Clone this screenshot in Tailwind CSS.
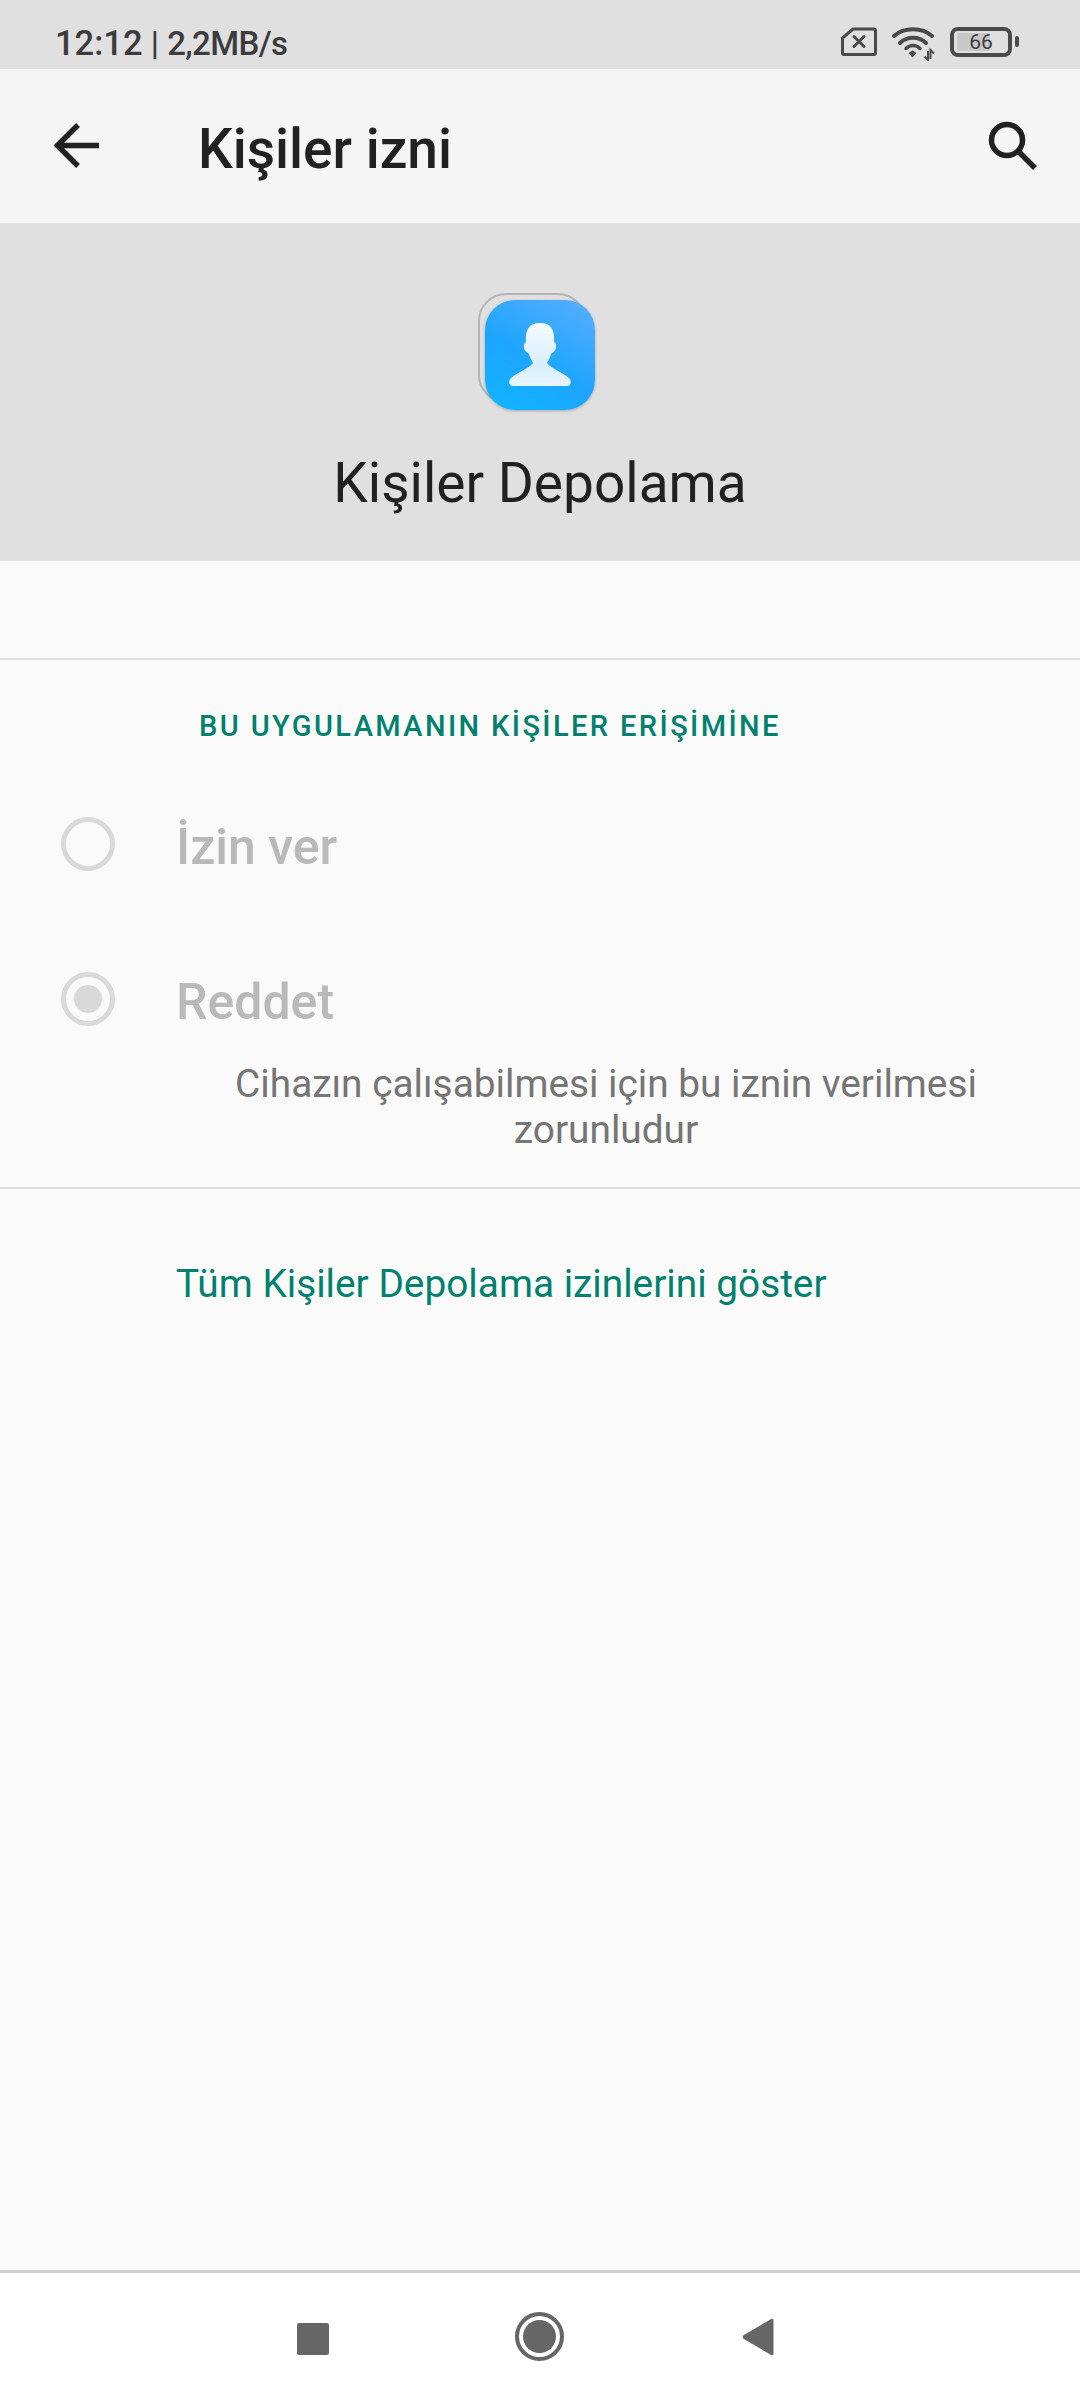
<!DOCTYPE html>
<html lang="en">

<head>
    <meta charset="UTF-8">
    <meta name="viewport" content="width=device-width, initial-scale=1.0">
    <title>Kişiler izni</title>
    <script src="https://cdn.jsdelivr.net/npm/@tailwindcss/browser@4"></script>
</head>

<body class="bg-[#fafafa] font-['Roboto',sans-serif]">
    <div class="w-[1080px] h-[2400px] flex flex-col overflow-hidden">

        <!-- Status bar -->
        <div class="h-[69px] bg-[#e0e0e0] flex items-start justify-between pl-[55px] pr-[61px] shrink-0">
            <p class="leading-[40px] mt-[23px] font-medium text-[#3c3c3c] text-[33px] whitespace-nowrap"><span class="text-[34.500px]">12:12</span> | <span class="tracking-[-0.600px]">2,2MB/s</span></p>
            <div class="flex items-start mt-[27px]">
                <svg width="36" height="30" viewBox="0 0 36 30" fill="none" stroke="#4a4a4a" stroke-width="3">
                    <path d="M12 2H33a1.500 1.500 0 0 1 1.500 1.500V26a1.500 1.500 0 0 1-1.500 1.500H3a1.500 1.500 0 0 1-1.500-1.500V11Z" />
                    <path d="M13 9.500 23 19.500M23 9.500 13 19.500" stroke-linecap="round" />
                </svg>
                <svg width="44" height="34" viewBox="0 0 44 34" fill="none" stroke="#4a4a4a" stroke-width="4" stroke-linecap="round" class="ml-[15px]">
                    <path d="M2 9C12 0 30 0 40 9" />
                    <path d="M8 16C15 9 27 9 34 16" />
                    <path d="M14 21.500C18 17.500 24 17.500 28 21.500" stroke-width="3.500" />
                    <path d="M16.500 26 20.500 23.500 24.500 26 20.500 30.500Z" fill="#4a4a4a" stroke="none" />
                    <path d="M36 24V33L32.500 29.500M38.500 32V23L42 26.500" stroke-width="2" stroke-linecap="butt" />
                </svg>
                <div class="relative w-[62px] h-[30px] border-[4px] border-[#4a4a4a] rounded-[8px] flex items-center ml-[14px]">
                    <div class="absolute left-[3px] top-[2px] bottom-[2px] w-[33px] bg-[#c8c8c8] rounded-[2px]"></div>
                    <span class="relative w-full text-center text-[21px] leading-[22px] text-[#3c3c3c]">66</span>
                </div>
                <div class="w-[4px] h-[11px] bg-[#4a4a4a] rounded-[2px] ml-[3px] mt-[9px]"></div>
            </div>
        </div>

        <!-- Toolbar -->
        <div class="h-[154px] bg-[#f5f5f5] flex items-center justify-between pl-[54px] pr-[42px] shrink-0">
            <div class="flex items-center">
                <svg width="45" height="45" viewBox="0 0 45 45" fill="none" stroke="#212121" stroke-width="5.500" class="mt-[-1px]">
                    <path d="M45 22.500H4" />
                    <path d="M24 2 3.500 22.500 24 43" />
                </svg>
                <h1 class="ml-[99px] text-[55px] leading-[64px] font-medium text-[#212121] mt-[5px]">Kişiler izni</h1>
            </div>
            <svg width="50" height="50" viewBox="0 0 50 50" fill="none" stroke="#212121" stroke-width="5.500">
                <circle cx="19" cy="19" r="15.500" />
                <path d="M30 30 47 47" />
            </svg>
        </div>

        <!-- App header -->
        <div class="h-[338px] bg-[#e0e0e0] flex flex-col items-center shrink-0">
            <div class="relative w-[124px] h-[118px] mt-[70px]">
                <div class="absolute left-0 top-0 w-[108px] h-[110px] border-[2px] border-[#b4b4b4] rounded-[28px]"></div>
                <div class="absolute left-[7px] top-[7px] w-[110px] h-[110px] rounded-[30px] bg-[linear-gradient(30deg,#10b4ff_5%,#1ea5ff_45%,#5aaeff_100%)] shadow-[0_1px_3px_rgba(0,0,0,0.25)] flex items-center justify-center">
                    <svg width="64" height="64" viewBox="0 0 64 64">
                        <defs>
                            <linearGradient id="person" x1="0" y1="0" x2="0" y2="1">
                                <stop offset="0" stop-color="#f4faff" />
                                <stop offset="0.7" stop-color="#d8eeff" />
                                <stop offset="1" stop-color="#eaf6ff" />
                            </linearGradient>
                        </defs>
                        <path fill="url(#person)" d="M32 0C43 0 47 7 46 19 48.500 20 49 25 46.500 28 45 30 44 30 43 31 42 35 40 38 39 40 44 46 56 50 61 55 64 58 63 63 59 63H5C1 63 0 58 3 55 8 50 20 46 25 40 24 38 22 35 21 31 20 30 19 30 17.500 28 15 25 15.500 20 18 19 17 7 21 0 32 0Z" />
                    </svg>
                </div>
            </div>
            <p class="mt-[40px] text-[55px] leading-[64px] text-[#212121]">Kişiler Depolama</p>
        </div>

        <!-- Permission section -->
        <div class="mt-[97px] border-t-[2px] border-b-[2px] border-[#dedede] h-[531px] shrink-0">
            <p class="ml-[199px] mt-[46px] text-[29px] leading-[40px] font-medium tracking-[2.400px] text-[#00806f]">BU UYGULAMANIN KİŞİLER ERİŞİMİNE</p>
            <div class="flex items-center h-[64px] mt-[67px] pl-[61px]">
                <div class="w-[54px] h-[54px] mb-[2px] rounded-full border-[5px] border-[#d9d9d9]"></div>
                <span class="ml-[61px] mt-[3px] text-[50px] leading-[64px] font-medium text-[#b9b9b9]">İzin ver</span>
            </div>
            <div class="flex items-center h-[64px] mt-[91px] pl-[61px]">
                <div class="w-[54px] h-[54px] mb-[2px] rounded-full border-[5px] border-[#d9d9d9] flex items-center justify-center">
                    <div class="w-[28px] h-[28px] rounded-full bg-[#d9d9d9]"></div>
                </div>
                <span class="ml-[61px] mt-[3px] text-[50px] leading-[64px] font-medium text-[#b9b9b9]">Reddet</span>
            </div>
            <p class="mt-[29px] pl-[176px] pr-[44px] text-center text-[38.800px] leading-[46px] text-[#757575]">Cihazın çalışabilmesi için bu iznin verilmesi zorunludur</p>
        </div>

        <!-- Link -->
        <a class="ml-[176px] mt-[72px] text-[38.800px] leading-[46px] text-[#00806f]">Tüm Kişiler Depolama izinlerini göster</a>

        <!-- Nav bar -->
        <div class="mt-auto h-[130px] bg-white border-t-[3px] border-[#cfcfcf] shrink-0 flex items-center pl-[297px]">
            <div class="w-[32px] h-[32px] bg-[#666666] rounded-[2px] mt-[4px]"></div>
            <div class="w-[49px] h-[49px] ml-[186px] rounded-full border-[4px] border-[#666666] flex items-center justify-center">
                <div class="w-[33px] h-[33px] rounded-full bg-[#666666]"></div>
            </div>
            <svg width="32" height="38" viewBox="0 0 32 38" class="ml-[178px]">
                <path fill="#666666" d="M30 0.500 31.500 1.500V36.500L30 37.500 1 20.500V17.500Z" />
            </svg>
        </div>
    </div>
</body>

</html>
